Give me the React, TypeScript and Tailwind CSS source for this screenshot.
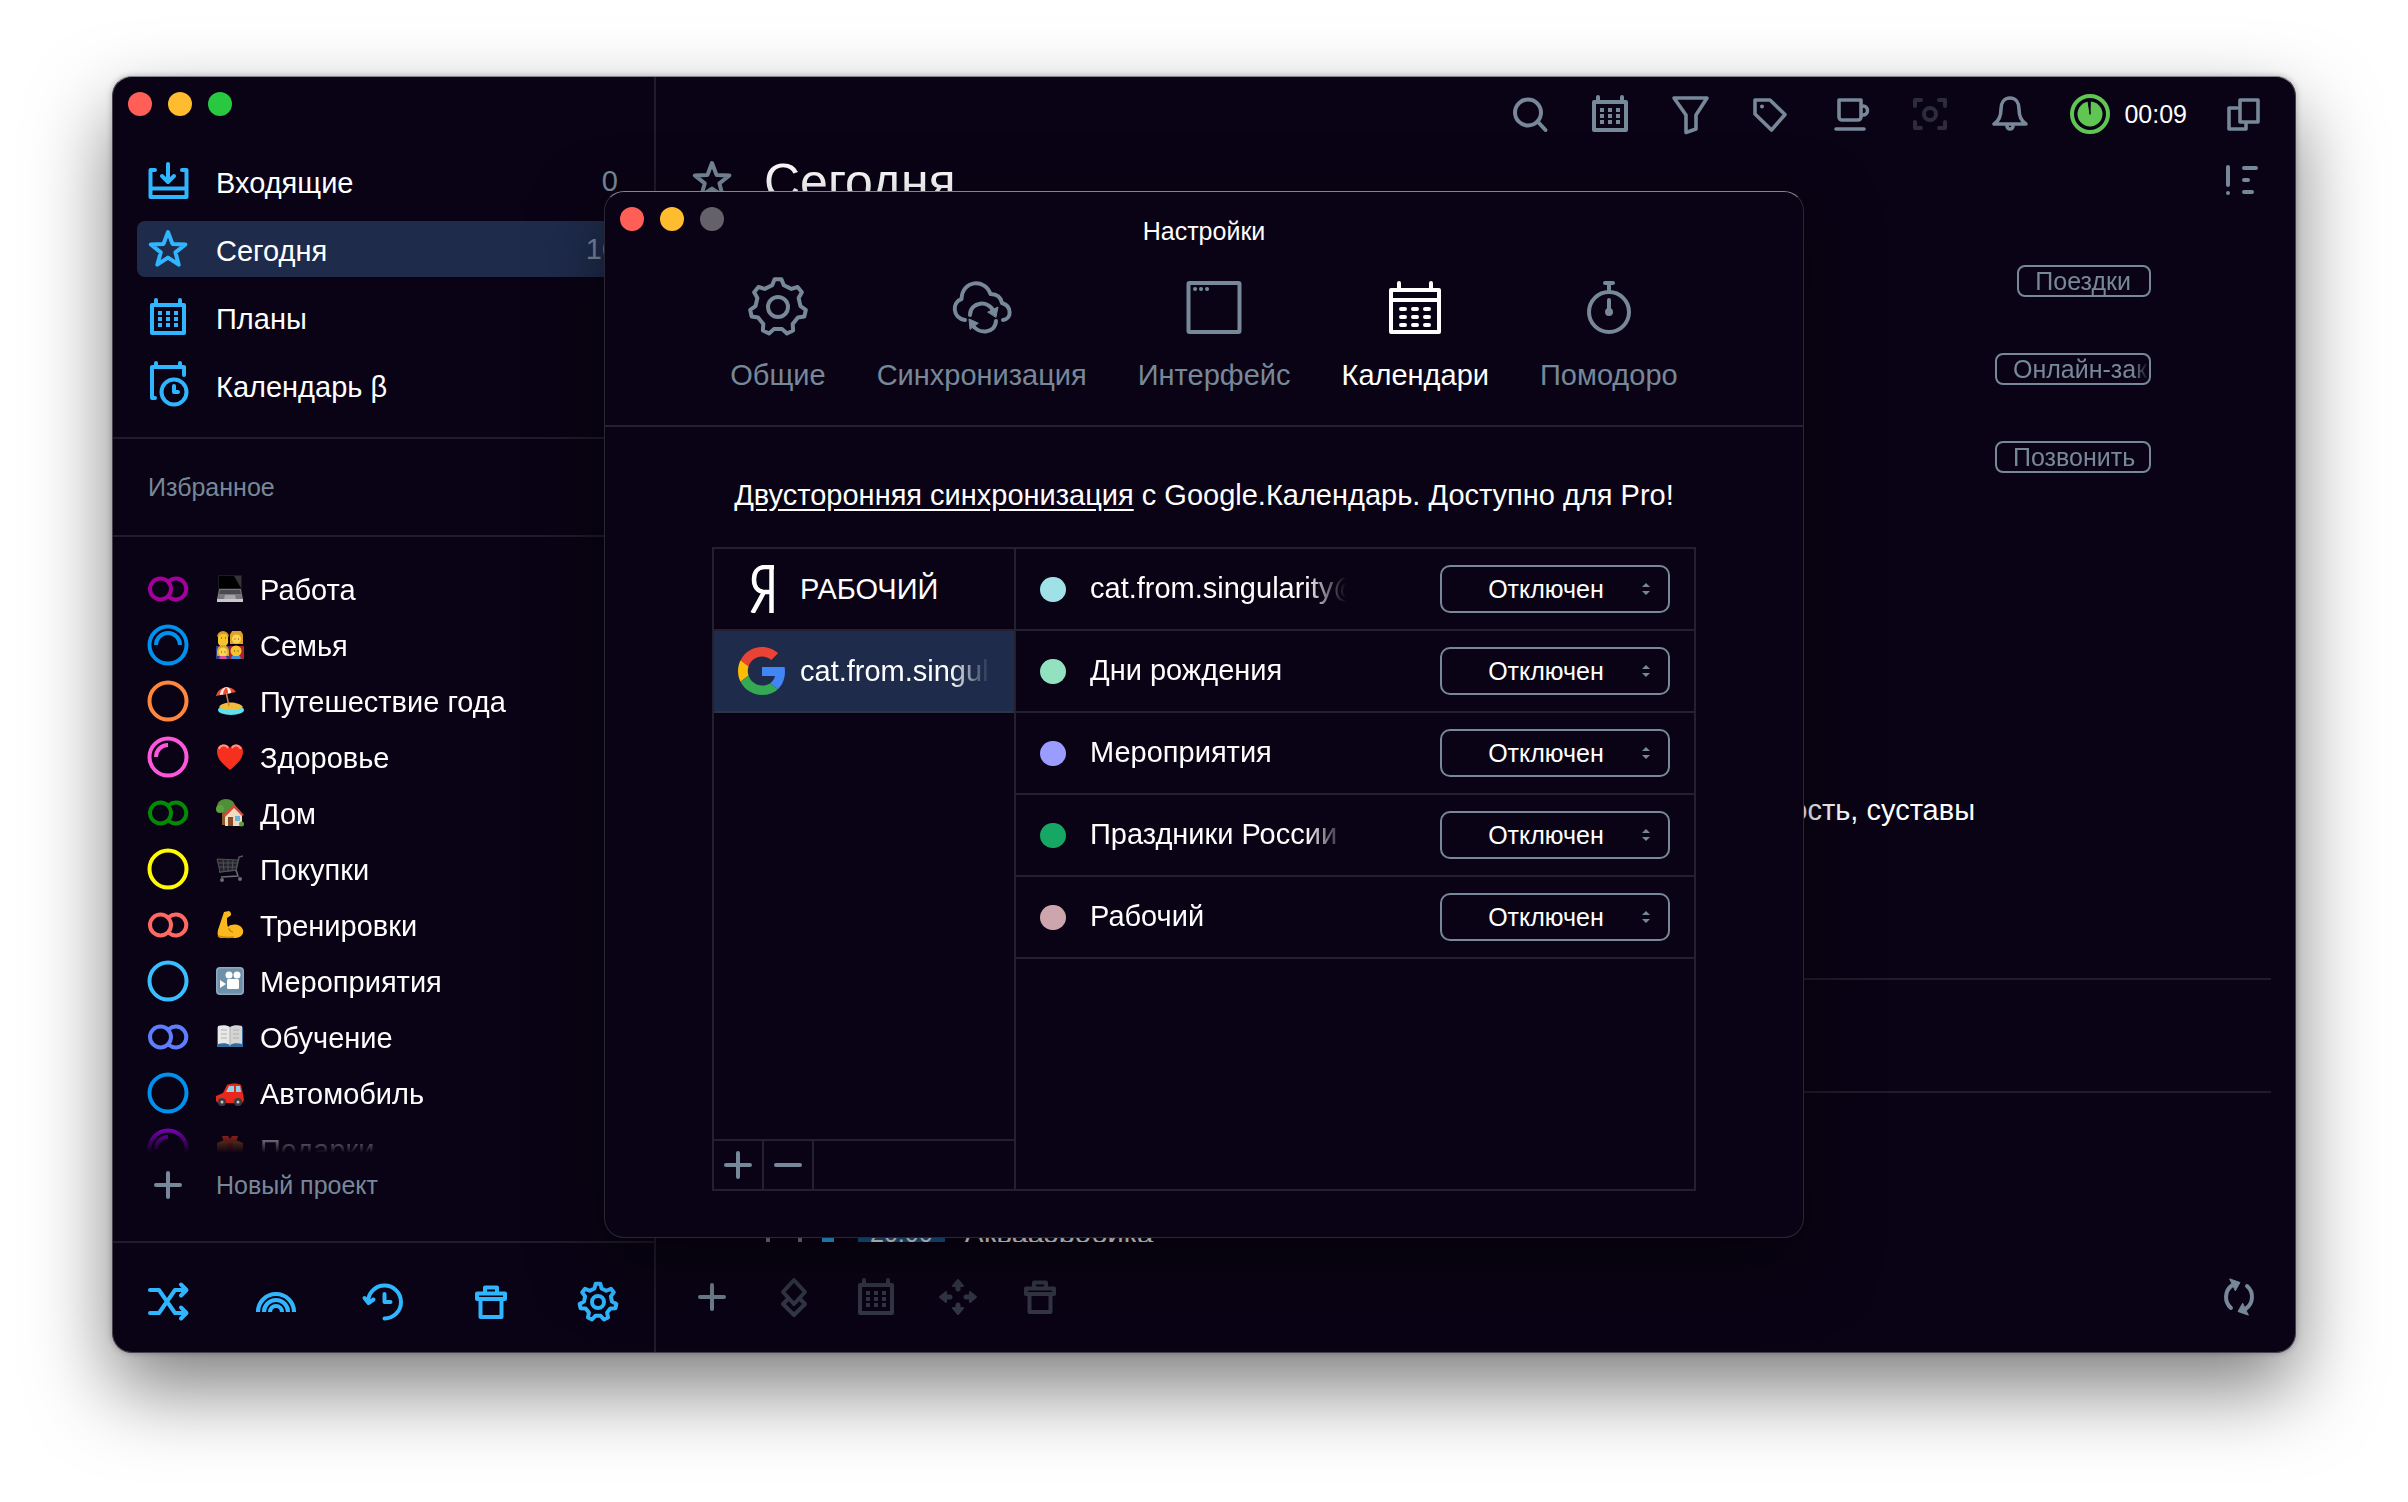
import { useState } from 'react';
import type { ReactNode } from 'react';

type IconProps = { children: ReactNode; className?: string };

function Icon({ children, className = '' }: IconProps) {
  return (
    <svg
      viewBox="0 0 40 40"
      fill="none"
      stroke="currentColor"
      strokeWidth="4"
      strokeLinecap="round"
      strokeLinejoin="round"
      aria-hidden="true"
      className={`h-10 w-10 shrink-0 overflow-visible ${className}`}
    >
      {children}
    </svg>
  );
}

function TabIcon({ children }: { children: ReactNode }) {
  return (
    <svg
      viewBox="0 0 60 60"
      fill="none"
      stroke="currentColor"
      strokeWidth="4"
      strokeLinecap="round"
      strokeLinejoin="round"
      aria-hidden="true"
      className="h-[60px] w-[60px]"
    >
      {children}
    </svg>
  );
}

// seven-toothed cog outline
function gearPath(center: number, outer: number, inner: number) {
  const points: string[] = [];
  for (let i = 0; i < 7; i++) {
    const base = -90 + (i * 360) / 7;
    const steps: [number, number][] = [[-15, inner], [-7, outer], [7, outer], [15, inner]];
    steps.forEach(([offset, r]) => {
      const a = ((base + offset) * Math.PI) / 180;
      points.push(`${(center + r * Math.cos(a)).toFixed(2)} ${(center + r * Math.sin(a)).toFixed(2)}`);
    });
  }
  return `M${points.join('L')}Z`;
}

function InboxIcon() {
  return (
    <Icon>
      <path d="M7 9H2.500v27h36V9H34M3 27.500h35M20 3v17M14 15l6 6 6-6" />
    </Icon>
  );
}

function StarIcon({ className = '' }: { className?: string }) {
  return (
    <Icon className={className}>
      <path d="M20 3l4.500 11.900 12.900.6-10 7.800 3.300 12.400L20 28.600 9.300 35.700l3.500-12.400-10-7.800 12.700-.6z" />
    </Icon>
  );
}

function CalendarIcon({ className = '' }: { className?: string }) {
  return (
    <Icon className={className}>
      <path d="M4 8h32v28H4zM8 3v4M32 3v4" />
      <path
        d="M10 14h4v4h-4zM18 14h4v4h-4zM26 14h4v4h-4zM10 20h4v4h-4zM18 20h4v4h-4zM26 20h4v4h-4zM10 26h4v4h-4zM18 26h4v4h-4zM26 26h4v4h-4z"
        fill="currentColor"
        stroke="none"
      />
    </Icon>
  );
}

function CalendarClockIcon() {
  return (
    <Icon>
      <path d="M7 33H4V2h32v8M8-2v4M32-2v4" />
      <circle cx="26" cy="27" r="12.500" />
      <path d="M26 21v6h4" />
    </Icon>
  );
}

function TrashIcon({ className = '' }: { className?: string }) {
  return (
    <Icon className={className}>
      <path d="M14 11V5.500h12V11M6 11.500h28V17H6zM9.500 17v18h21V17" />
    </Icon>
  );
}

function PlusIcon({ className = '' }: { className?: string }) {
  return (
    <Icon className={className}>
      <path d="M20 8v24M8 20h24" />
    </Icon>
  );
}

type MarkKind = 'loop' | 'ring' | 'half' | 'quarter';

function ProjectMark({ kind, color }: { kind: MarkKind; color: string }) {
  return (
    <span style={{ color }}>
      <Icon>
        {kind === 'loop' ? (
          <>
            <circle cx="12.500" cy="20" r="10.500" />
            <path d="M21 12A10.500 10.500 0 1 1 21 28" />
          </>
        ) : (
          <circle cx="20" cy="20" r="18.500" />
        )}
        {kind === 'half' && <path d="M8 20a12 12 0 0 1 24 0" strokeLinecap="butt" />}
        {kind === 'quarter' && <path d="M8 20a12 12 0 0 1 12-12" strokeLinecap="butt" />}
      </Icon>
    </span>
  );
}

function Picture({ children }: { children: ReactNode }) {
  return (
    <svg viewBox="0 0 28 28" aria-hidden="true" className="h-7 w-7 shrink-0">
      {children}
    </svg>
  );
}

const pictures: Record<string, ReactNode> = {
  laptop: (
    <Picture>
      <path d="M2 0h24v14H2z" fill="#1c1c20" />
      <path d="M3 1h22v12H3z" fill="#000" />
      <path d="M18 1h7v12z" fill="#34343a" />
      <path d="M3 14h22l2 10H1z" fill="#77777c" />
      <path d="M4 15h20l1 4H3z" fill="#4a4a50" />
      <path d="M9 20h10l1 4H8z" fill="#a5a5a8" />
      <path d="M1 24h26v3H1z" fill="#c9c9cb" />
    </Picture>
  ),
  family: (
    <Picture>
      <path d="M0 15h14v13H0z" fill="#2b3f8f" />
      <path d="M14 15h14v13H14z" fill="#b3202a" />
      <path d="M2 13V6a5 5 0 0 1 10 0v3a5 5 0 0 1-10 3z" fill="#f5c42c" />
      <path d="M1 6a6 6 0 0 1 12 0L10 3H5z" fill="#d79a22" />
      <path d="M14 13V5a6.500 6.500 0 0 1 13 0v8z" fill="#e0a02a" />
      <circle cx="20.500" cy="8" r="4.500" fill="#fbd650" />
      <path d="M1 25v-5a6 6 0 0 1 12 0v5z" fill="#e0a02a" />
      <circle cx="7" cy="21" r="4.500" fill="#fbd650" />
      <circle cx="20" cy="20" r="5.500" fill="#f5c42c" />
      <path d="M4 25h6l1 3H3z" fill="#d64fa0" />
      <path d="M16 25h8l1 3H15z" fill="#3d8edb" />
      <path d="M5 7h1M9 7h1M18.500 8h1M22 8h1M5 21h1M8.500 21h1M18 20h1M21.500 20h1" stroke="#5d3a0c" />
    </Picture>
  ),
  beach: (
    <Picture>
      <ellipse cx="15" cy="23" rx="13" ry="5" fill="#5fe0ee" />
      <path d="M3 20c3-6 20-6 24 0-5 4-19 4-24 0z" fill="#f3bd3b" />
      <path d="M10 5l3 14" stroke="#c8873e" strokeWidth="1.500" />
      <path d="M0 9C2 0 14-3 20 5L0 9z" fill="#f04b32" />
      <path d="M4 8C4 3 8 0 11 0c3 1 4 3 4 6z" fill="#fff3ea" />
      <path d="M7 7.500c0-4 2-6 3-7 2 1 2 4 2 6z" fill="#f04b32" />
    </Picture>
  ),
  heart: (
    <Picture>
      <path d="M14 27C7 21 1 16 1 8.500 1 1 10-1 14 5c4-6 13-4 13 3.500C27 16 21 21 14 27z" fill="#f5301f" />
      <path d="M3 6c1-4 7-5 9-1M16 5c2-4 7-3 9 1" stroke="#ff9384" strokeWidth="2" fill="none" />
    </Picture>
  ),
  house: (
    <Picture>
      <path d="M6 8h3v18H6z" fill="#8a5a2c" />
      <ellipse cx="10" cy="7" rx="9" ry="7" fill="#4f8f35" />
      <circle cx="4" cy="10" r="4" fill="#5da03f" />
      <path d="M9 15l9-8 8 8v12H9z" fill="#f0ddc0" />
      <path d="M7 16L18 5l10 11-2 1-8-8-9 9z" fill="#cf4b3a" />
      <path d="M12 18h5v9h-5z" fill="#8a4a24" />
      <path d="M19 17h5v5h-5z" fill="#6db4e0" />
      <circle cx="25.500" cy="25" r="2.500" fill="#5da03f" />
    </Picture>
  ),
  cart: (
    <Picture>
      <path d="M27 1l-4 1-3 13-17 2" stroke="#55555c" strokeWidth="1.500" fill="none" />
      <path d="M1 4l21 1-2 10-16 2z" fill="#24242b" stroke="#505058" />
      <path d="M2 8h19M3 12h18M7 5l1 11M12 5v11M17 5l-1 11" stroke="#505058" />
      <path d="M20 15l2 6-17 1" stroke="#6b6b72" strokeWidth="1.500" fill="none" />
      <circle cx="6" cy="25" r="2" fill="#6b6b72" />
      <circle cx="24" cy="24" r="2" fill="#6b6b72" />
    </Picture>
  ),
  muscle: (
    <Picture>
      <path
        d="M8 1l5-1c2 1 3 4 1 5l-3 2c0 4 0 7 1 9 4-4 13-3 15 3 1 4-2 8-8 8H5c-3 0-4-3-3-8z"
        fill="#fbb91d"
      />
      <path d="M13 17c0 2 2 4 4 4M2 25c3 1 8 2 16 1" stroke="#cf8209" strokeWidth="1.500" fill="none" />
    </Picture>
  ),
  camera: (
    <Picture>
      <rect width="28" height="28" rx="4" fill="#8fabbe" />
      <rect x="1.500" y="1.500" width="25" height="25" rx="3" fill="#6e90a8" />
      <circle cx="13" cy="8" r="3.500" fill="#fff" />
      <circle cx="21" cy="8" r="3.500" fill="#fff" />
      <rect x="11" y="12" width="12" height="10" rx="1.500" fill="#fff" />
      <path d="M4 13l6 4-6 4z" fill="#fff" />
    </Picture>
  ),
  book: (
    <Picture>
      <path d="M1 4h26v20H1z" fill="#2f6c9c" />
      <path d="M2 3c4-1 9-1 12 1v18c-3-2-8-2-12-1z" fill="#e9e9e9" />
      <path d="M26 3c-4-1-9-1-12 1v18c3-2 8-2 12-1z" fill="#d4d4d4" />
      <path d="M14 4v19M5 7h6M5 11h6M5 15h6M17 7h6M17 11h6M17 15h6" stroke="#b0b0b0" />
    </Picture>
  ),
  car: (
    <Picture>
      <path d="M0 17l7-3 4-8c4-2 11-2 14 0l2 9 1 6-2 3H2l-2-2z" fill="#e8281c" />
      <path d="M10 13l3-6h5v6zM20 7h4l1 6h-5z" fill="#8fd4e6" />
      <circle cx="6" cy="23" r="4" fill="#3c3c40" />
      <circle cx="22" cy="23" r="4" fill="#3c3c40" />
      <circle cx="6" cy="23" r="1.500" fill="#c4c4c4" />
      <circle cx="22" cy="23" r="1.500" fill="#c4c4c4" />
    </Picture>
  ),
  gift: (
    <Picture>
      <path d="M1 8l7-3h12l7 3v18H1z" fill="#c06a1c" />
      <path d="M6 1h6l2 3 2-3h6l-2 6H8z" fill="#f03a24" />
      <path d="M11 8h6v18h-6z" fill="#e02818" />
    </Picture>
  ),
};

const projects: { name: string; picture: string; kind: MarkKind; color: string }[] = [
  { name: 'Работа', picture: 'laptop', kind: 'loop', color: '#a3009c' },
  { name: 'Семья', picture: 'family', kind: 'half', color: '#0090ee' },
  { name: 'Путешествие года', picture: 'beach', kind: 'ring', color: '#ff863c' },
  { name: 'Здоровье', picture: 'heart', kind: 'quarter', color: '#ff57dc' },
  { name: 'Дом', picture: 'house', kind: 'loop', color: '#048a04' },
  { name: 'Покупки', picture: 'cart', kind: 'ring', color: '#fffb00' },
  { name: 'Тренировки', picture: 'muscle', kind: 'loop', color: '#ff6961' },
  { name: 'Мероприятия', picture: 'camera', kind: 'ring', color: '#3abeff' },
  { name: 'Обучение', picture: 'book', kind: 'loop', color: '#5f7dff' },
  { name: 'Автомобиль', picture: 'car', kind: 'ring', color: '#0090ee' },
  { name: 'Подарки', picture: 'gift', kind: 'quarter', color: '#a000f0' },
];

const menu: { name: string; icon: ReactNode; count?: string }[] = [
  { name: 'Входящие', icon: <InboxIcon />, count: '0' },
  { name: 'Сегодня', icon: <StarIcon />, count: '16' },
  { name: 'Планы', icon: <CalendarIcon /> },
  { name: 'Календарь β', icon: <CalendarClockIcon /> },
];

const tasks: { title?: string; tag?: string }[] = [
  { tag: 'Поездки' },
  { tag: 'Онлайн-заказ' },
  { tag: 'Позвонить' },
  {},
  {},
  {},
  { title: 'Гибкость, суставы' },
  {},
];

const calendars = [
  { name: 'cat.from.singularity@gmail.com', color: '#9fe1e7' },
  { name: 'Дни рождения', color: '#92e1c0' },
  { name: 'Мероприятия', color: '#9a9cff' },
  { name: 'Праздники России', color: '#16a765' },
  { name: 'Рабочий', color: '#cca6ac' },
];

function TrafficLights({ last }: { last: 'green' | 'gray' }) {
  return (
    <div className="flex gap-4">
      <button aria-label="Закрыть" className="h-6 w-6 rounded-full bg-[#ff5f57]" />
      <button aria-label="Свернуть" className="h-6 w-6 rounded-full bg-[#febc2e]" />
      <button
        aria-label="Развернуть"
        className={`h-6 w-6 rounded-full ${last === 'green' ? 'bg-[#28c840]' : 'bg-[#65616b]'}`}
      />
    </div>
  );
}

function Sidebar() {
  return (
    <aside className="flex w-[543px] shrink-0 flex-col border-r-2 border-[#1f1c2b]">
      <div className="px-[15px] pt-[15px]">
        <TrafficLights last="green" />
      </div>
      <nav className="flex flex-col gap-3 border-b-2 border-[#1f1c2b] px-6 pt-[37px] pb-6">
        {menu.map((item) => (
          <a
            key={item.name}
            href="#"
            className={`flex h-14 items-center rounded-lg pr-3 pl-[11px] ${
              item.name === 'Сегодня' ? 'bg-[#1e2b4b]' : ''
            }`}
          >
            <span className="text-[#2fb6ff]">{item.icon}</span>
            <span className="ml-7 flex-1 pt-1 text-white">{item.name}</span>
            <span className="text-[#778899]">{item.count}</span>
          </a>
        ))}
      </nav>
      <h2 className="flex h-[98px] shrink-0 items-center border-b-2 border-[#1f1c2b] px-[35px] text-[25px] text-[#778899]">
        Избранное
      </h2>
      <div className="min-h-0 flex-1 overflow-hidden mask-[linear-gradient(to_top,transparent,black_32px)] px-[35px] pt-6">
        {projects.map((project) => (
          <a key={project.name} href="#" className="flex h-14 items-center">
            <ProjectMark kind={project.kind} color={project.color} />
            <span className="mr-4 ml-7">{pictures[project.picture]}</span>
            <span className="pt-[2px] text-white">{project.name}</span>
          </a>
        ))}
      </div>
      <button className="mb-6 flex h-16 shrink-0 items-center gap-7 px-[35px] text-[25px] text-[#778899]">
        <PlusIcon />
        Новый проект
      </button>
      <div className="flex h-[111px] shrink-0 items-center justify-between border-t-2 border-[#1f1c2b] pt-2 pr-9 pl-[35px] text-[#2fb6ff]">
        <button aria-label="Случайная задача">
          <Icon>
            <path d="M2 8h9l16 23h10M2 31h9L27 8h10M33 2.500l5.500 5.500-5.500 5.500M33 25.500l5.500 5.500-5.500 5.500" />
          </Icon>
        </button>
        <button aria-label="Радуга">
          <Icon>
            <path
              d="M2 30a18 18 0 0 1 36 0M8 30a12 12 0 0 1 24 0M14 30a6 6 0 0 1 12 0"
              strokeLinecap="butt"
              strokeWidth="4.200"
            />
          </Icon>
        </button>
        <button aria-label="История">
          <Icon>
            <path d="M5 20A16.500 16.500 0 1 1 21.500 36.500M1.500 16l4 5 5-3.500M21.500 12v8h6" />
          </Icon>
        </button>
        <button aria-label="Корзина">
          <TrashIcon />
        </button>
        <button aria-label="Настройки">
          <Icon>
            <path d={gearPath(20, 18.5, 14)} />
            <circle cx="20" cy="20" r="6" />
          </Icon>
        </button>
      </div>
    </aside>
  );
}

function TopBar() {
  return (
    <div className="flex h-[74px] shrink-0 items-center justify-end gap-10 pr-8 text-[#778899]">
      <button aria-label="Поиск">
        <Icon>
          <circle cx="18" cy="18.500" r="13" />
          <path d="M28 28l7.500 8" />
        </Icon>
      </button>
      <button aria-label="Планы">
        <CalendarIcon />
      </button>
      <button aria-label="Фильтр">
        <Icon>
          <path d="M4 4h33L26 21v14l-10 3.500V21z" strokeWidth="3.600" />
        </Icon>
      </button>
      <button aria-label="Теги">
        <Icon>
          <path d="M5 6h15l15 14.500L21.500 36 5 20z" strokeWidth="3.600" />
          <circle cx="12" cy="12.500" r="2" fill="currentColor" stroke="none" />
        </Icon>
      </button>
      <button aria-label="Перерыв">
        <Icon>
          <path d="M9 6h22v17a3 3 0 0 1-3 3H12a3 3 0 0 1-3-3zM31 12h2a4 4 0 0 1 0 9h-2M6 35h28" strokeWidth="3.600" />
        </Icon>
      </button>
      <button aria-label="Фокус" className="text-[#2d2c3c]">
        <Icon>
          <path d="M5 12V6h6M29 6h6v6M35 28v6h-6M11 34H5v-6" />
          <circle cx="20" cy="20" r="6" />
        </Icon>
      </button>
      <button aria-label="Уведомления">
        <Icon>
          <path
            d="M20 4c-6 0-9 5-9 11 0 8-2 12-7 15h32c-5-3-7-7-7-15 0-6-3-11-9-11zM17 32a3 3 0 0 0 6 0"
            strokeWidth="3.600"
          />
        </Icon>
      </button>
      <div className="-mr-1 flex items-center gap-[14px] text-[25px] text-white">
        <Icon className="text-[#61c554]">
          <circle cx="20" cy="20" r="18" />
          <circle cx="20" cy="20" r="12.500" fill="currentColor" stroke="none" />
          <path d="M20 20L18 7h2z" fill="#0a0315" stroke="#0a0315" strokeWidth="1" />
        </Icon>
        00:09
      </div>
      <button aria-label="Окна">
        <Icon>
          <path d="M17 6h18v22H17zM14 14H6v21h17v-5" strokeWidth="3.600" />
        </Icon>
      </button>
    </div>
  );
}

function TaskList() {
  return (
    <div className="min-h-0 flex-1 overflow-hidden pt-7 pr-6 pl-9 text-white">
      {tasks.map((task, index) => (
        <div key={index} className="flex h-[88px] items-center justify-end">
          {task.title && <span className="mr-[296px] pt-[2px]">{task.title}</span>}
          {task.tag && (
            <span className="mr-[120px] flex h-8 max-w-[156px] items-center rounded-lg border-2 border-[#778899] px-4 text-[25px] whitespace-nowrap text-[#778899]">
              <span className="-mr-4 overflow-hidden mask-[linear-gradient(to_left,transparent,black_16px)] pr-[18px]">
                {task.tag}
              </span>
            </span>
          )}
        </div>
      ))}
      <div className="mt-[37px] mb-2 h-[115px] border-y-2 border-[#1f1c2b]" />
      <div className="h-[88px]" />
      <div className="flex h-[88px] items-center pl-[74px]">
        <input
          type="checkbox"
          aria-label="Аквааэробика"
          className="h-9 w-9 appearance-none rounded-lg border-4 border-[#778899]"
        />
        <span className="ml-5 h-9 w-3 bg-[#2fb6ff]" />
        <span className="mr-5 ml-6 flex h-8 items-center rounded-lg bg-[#1a5f99] px-3 text-[25px]">20:00</span>
        Аквааэробика
      </div>
    </div>
  );
}

function BottomBar() {
  return (
    <div className="flex h-[110px] shrink-0 items-center gap-[42px] pr-9 pl-9 text-[#343747]">
      <button aria-label="Добавить" className="text-[#708090]">
        <PlusIcon />
      </button>
      <button aria-label="Приоритет">
        <Icon>
          <path d="M20 3l11 12-11 12L9 15zM14 22l-5 5 11 11 11-11-5-5" />
        </Icon>
      </button>
      <button aria-label="Дата">
        <CalendarIcon />
      </button>
      <button aria-label="Переместить">
        <Icon>
          <path d="M20 8v4M20 28v4M8 20h4M28 20h4" strokeWidth="5" />
          <path
            d="M20 3l5 6H15zM20 37l5-6H15zM2 20l6-5v10zM38 20l-6-5v10z"
            fill="currentColor"
            strokeWidth="2"
          />
        </Icon>
      </button>
      <button aria-label="Удалить">
        <TrashIcon />
      </button>
      <button aria-label="Синхронизировать" className="ml-auto text-[#778899]">
        <Icon>
          <path d="M12 31A14.500 14.500 0 0 1 13.500 8M28 9a14.500 14.500 0 0 1-1.500 23" />
          <path d="M11 2l10 3.500-4.500 8zM29 38l-10-3.500 4.500-8z" fill="currentColor" strokeWidth="1" />
        </Icon>
      </button>
    </div>
  );
}

function YandexLogo() {
  return (
    <svg viewBox="0 0 48 48" aria-hidden="true" className="h-12 w-12 shrink-0">
      <path
        d="M33.500 0v48M36 2h-9c-7 0-11 5-11 12.500S20 27 27 27h7M26 27L14.500 48"
        fill="none"
        stroke="#fff"
        strokeWidth="4.500"
      />
    </svg>
  );
}

function GoogleLogo() {
  return (
    <svg viewBox="0 0 48 48" aria-hidden="true" className="h-12 w-12 shrink-0">
      <path
        fill="#ea4335"
        d="M24 9.500c3.540 0 6.710 1.220 9.210 3.600l6.850-6.850C35.900 2.380 30.470 0 24 0 14.620 0 6.510 5.380 2.560 13.220l7.980 6.190C12.430 13.720 17.740 9.500 24 9.500z"
      />
      <path
        fill="#4285f4"
        d="M46.980 24.550c0-1.570-.15-3.090-.38-4.550H24v9.020h12.940c-.58 2.960-2.260 5.480-4.780 7.180l7.730 6c4.510-4.180 7.090-10.360 7.090-17.650z"
      />
      <path
        fill="#fbbc05"
        d="M10.530 28.590c-.48-1.450-.76-2.990-.76-4.590s.27-3.140.76-4.590l-7.980-6.190C.92 16.460 0 20.120 0 24c0 3.880.92 7.540 2.560 10.780l7.970-6.190z"
      />
      <path
        fill="#34a853"
        d="M24 48c6.480 0 11.930-2.130 15.890-5.810l-7.730-6c-2.150 1.450-4.920 2.300-8.160 2.300-6.260 0-11.570-4.220-13.470-9.910l-7.980 6.190C6.510 42.620 14.620 48 24 48z"
      />
    </svg>
  );
}

const tabs: { name: string; icon: ReactNode }[] = [
  {
    name: 'Общие',
    icon: (
      <TabIcon>
        <path d={gearPath(30, 28, 22.5)} />
        <circle cx="30" cy="30" r="10" />
      </TabIcon>
    ),
  },
  {
    name: 'Синхронизация',
    icon: (
      <TabIcon>
        <path d="M13 43C0 41 0 25 9.500 22C10 3 33 1 38.500 17C46 17 49 21 50 26C60 29 60 42 51 43" />
        <path d="M18 38C18 25 37 22 42 35M44 44C43 57 26 58 20 47" />
        <path d="M36 35l10-5-2 10zM18 52l-1-10 9 4z" fill="currentColor" strokeWidth="1" />
      </TabIcon>
    ),
  },
  {
    name: 'Интерфейс',
    icon: (
      <TabIcon>
        <rect x="4.500" y="6" width="51" height="49" rx="1" />
        <path d="M11 12h.1M17 12h.1M23 12h.1" />
      </TabIcon>
    ),
  },
  {
    name: 'Календари',
    icon: (
      <TabIcon>
        <path d="M6 13h48v42H6zM6 23h48M14 6v6M46 6v6M16 32h4M28 32h4M40 32h4M16 40h4M28 40h4M40 40h4M16 48h4M28 48h4M40 48h4" />
      </TabIcon>
    ),
  },
  {
    name: 'Помодоро',
    icon: (
      <TabIcon>
        <circle cx="30" cy="35" r="20" />
        <path d="M26 6h8M30 6v8M30 23v12" />
        <circle cx="30" cy="35" r="3" fill="currentColor" strokeWidth="2" />
      </TabIcon>
    ),
  },
];

function CalendarRow({ name, color }: { name: string; color: string }) {
  return (
    <li className="flex h-[82px] items-center border-b-2 border-[#232031] px-6">
      <span className="h-[25px] w-[26px] rounded-full" style={{ backgroundColor: color }} />
      <span className="ml-6 w-64 overflow-hidden mask-[linear-gradient(to_left,transparent,black_40px)] pb-[2px] whitespace-nowrap">
        {name}
      </span>
      <span className="relative ml-auto">
        <select
          aria-label={name}
          className="h-12 w-[230px] appearance-none rounded-[10px] border-2 border-[#778899] bg-[#0a0315] pr-[26px] pl-2 text-center text-[25px] text-white"
        >
          <option>Отключен</option>
          <option>Включен</option>
        </select>
        <svg
          viewBox="0 0 10 14"
          fill="#778899"
          aria-hidden="true"
          className="pointer-events-none absolute top-[17px] right-[19px] h-[14px] w-[10px]"
        >
          <path d="M5 1l4 4H1zM5 13l4-4H1z" />
        </svg>
      </span>
    </li>
  );
}

function SettingsDialog() {
  const [activeTab, setActiveTab] = useState('Календари');
  const [account, setAccount] = useState('google');

  return (
    <div
      role="dialog"
      aria-label="Настройки"
      className="w-[1200px] rounded-[20px] border border-[#2b2836] border-t-[#86838c] bg-[#0a0315] pb-[46px] text-white shadow-[0_24px_70px_0_rgba(0,0,0,0.5)]"
    >
      <header className="grid grid-cols-[1fr_auto_1fr] px-[15px] pt-[15px]">
        <TrafficLights last="gray" />
        <h2 className="mt-2 text-[25px] leading-8">Настройки</h2>
      </header>
      <div role="tablist" className="flex justify-center gap-[51px] border-b-2 border-[#232031] pt-[30px] pb-8">
        {tabs.map((tab) => (
          <button
            key={tab.name}
            role="tab"
            aria-selected={activeTab === tab.name}
            onClick={() => setActiveTab(tab.name)}
            className={`flex flex-col items-center gap-5 ${
              activeTab === tab.name ? 'text-white' : 'text-[#778899]'
            }`}
          >
            {tab.icon}
            {tab.name}
          </button>
        ))}
      </div>
      <p className="mt-[50px] text-center">
        <a href="#" className="underline underline-offset-4">
          Двусторонняя синхронизация
        </a>{' '}
        с Google.Календарь. Доступно для Pro!
      </p>
      <div className="mx-[107px] mt-[34px] flex border-2 border-[#232031]">
        <div className="flex w-[302px] flex-col border-r-2 border-[#232031]">
          <button
            onClick={() => setAccount('yandex')}
            className={`flex h-[82px] items-center gap-[14px] border-b-2 border-[#232031] pr-7 pl-6 ${
              account === 'yandex' ? 'bg-[#1e2b4b]' : ''
            }`}
          >
            <YandexLogo />
            РАБОЧИЙ
          </button>
          <button
            onClick={() => setAccount('google')}
            className={`flex h-[82px] items-center gap-[14px] border-b-2 border-[#2a3548] pr-6 pl-6 ${
              account === 'google' ? 'bg-[#1e2b4b]' : ''
            }`}
          >
            <GoogleLogo />
            <span className="overflow-hidden mask-[linear-gradient(to_left,transparent,black_40px)] whitespace-nowrap">
              cat.from.singularity
            </span>
          </button>
          <div className="mt-auto flex border-t-2 border-[#232031] text-[#778899]">
            <button
              aria-label="Добавить"
              className="flex h-12 w-[50px] items-center justify-center border-r-2 border-[#232031]"
            >
              <PlusIcon />
            </button>
            <button
              aria-label="Удалить"
              className="flex h-12 w-[50px] items-center justify-center border-r-2 border-[#232031]"
            >
              <Icon>
                <path d="M8 20h24" />
              </Icon>
            </button>
          </div>
        </div>
        <ul className="min-h-[640px] flex-1">
          {calendars.map((calendar) => (
            <CalendarRow key={calendar.name} {...calendar} />
          ))}
        </ul>
      </div>
    </div>
  );
}

function App() {
  return (
    <div className="flex h-screen bg-white px-28 pt-[76px] pb-[149px] font-['Liberation_Sans',Arial,sans-serif] text-[29px] leading-9">
      <div className="relative flex min-w-0 flex-1 overflow-hidden rounded-[20px] border border-[#45424e] border-t-[#86838c] bg-[#0a0315] shadow-[0_36px_80px_rgba(0,0,0,0.5),0_0_6px_rgba(0,0,0,0.25)]">
        <Sidebar />
        <main className="flex min-w-0 flex-1 flex-col">
          <TopBar />
          <div className="flex h-[58px] shrink-0 items-center gap-8 pr-8 pl-9 text-[#778899]">
            <StarIcon />
            <h1 className="flex-1 pt-1 text-[50px] text-white">Сегодня</h1>
            <button aria-label="Сортировка">
              <Icon>
                <path d="M5 7v18M5 33v.1M21 8h12M21 20h4M21 32h8" />
              </Icon>
            </button>
          </div>
          <TaskList />
          <BottomBar />
        </main>
        <div className="absolute inset-0 flex items-center justify-center">
          <SettingsDialog />
        </div>
      </div>
    </div>
  );
}

export default App;
